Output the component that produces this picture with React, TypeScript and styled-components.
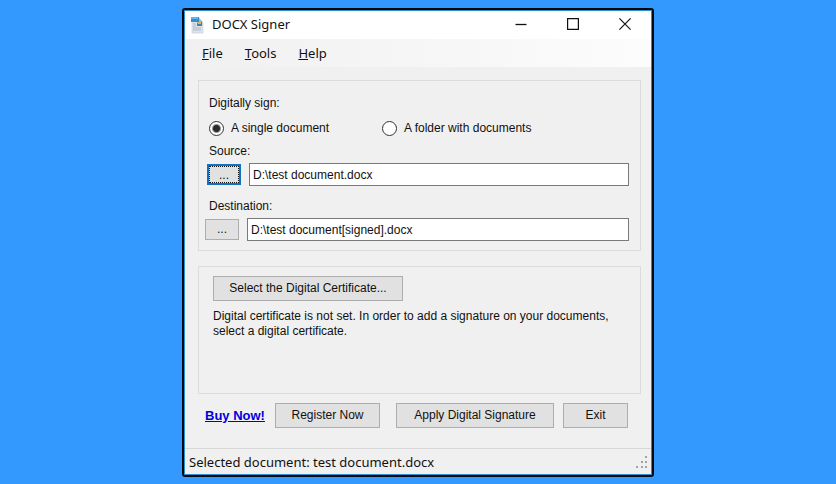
import React, { useState } from 'react';
import styled, { createGlobalStyle, css } from 'styled-components';

const GlobalStyle = createGlobalStyle`
  *, *::before, *::after { box-sizing: border-box; }
  body { margin: 0; background: #3399ff; }
`;

const classic = css`
  font-family: 'Liberation Sans', Arial, sans-serif;
  font-size: 12px;
  line-height: 15px;
  color: #111;
`;

const modern = css`
  font-family: 'Noto Sans', 'Open Sans', sans-serif;
  font-size: 13px;
  line-height: 18px;
  color: #111;
`;

const Desktop = styled.div`
  display: flex;
  min-height: 100vh;
  padding: 8px 182px 7px;
  background: #3399ff;
`;

const AppWindow = styled.main`
  ${classic}
  flex: 1;
  min-width: 0;
  display: flex;
  flex-direction: column;
  border: 2px solid #05080c;
  border-radius: 3px;
  background: #f0f0f0;
  box-shadow: inset 0 0 0 1px #2b8fd0;
  padding: 1px;
`;

const TitleBar = styled.header`
  ${modern}
  display: flex;
  align-items: center;
  height: 28px;
  padding-left: 5px;
  background: #fff;
`;

const Title = styled.h1`
  flex: 1;
  margin: 0 0 2px 8px;
  font-size: 13px;
  font-weight: 400;
`;

const CaptionButton = styled.button`
  display: grid;
  place-items: center;
  width: 52px;
  height: 28px;
  padding: 0 1px 2px 0;
  border: 0;
  background: transparent;
`;

const MenuBar = styled.nav`
  display: flex;
  align-items: center;
  gap: 6px;
  height: 28px;
  padding-left: 9px;
  background: linear-gradient(90deg, #f0f0f0, #fcfcfc);
`;

const MenuItem = styled.button`
  ${modern}
  border: 0;
  padding: 0 8px;
  background: transparent;
`;

const Content = styled.div`
  flex: 1;
  display: flex;
  flex-direction: column;
  padding: 13px 10px 20px 13px;
`;

const Group = styled.section`
  border: 1px solid #dcdcdc;
`;

const SignGroup = styled(Group)`
  padding: 15px 11px 9px 6px;
  margin-bottom: 15px;
`;

const CertificateGroup = styled(Group)`
  flex: 1;
  padding: 9px 13px 9px 14px;
  margin-bottom: 9px;
`;

const GroupHeading = styled.div`
  padding-left: 4px;
`;

const FieldLabel = styled.label`
  display: block;
  padding-left: 4px;
`;

const Choices = styled.div`
  display: grid;
  grid-template-columns: 173px 1fr;
  padding: 9px 0 8px 4px;
`;

const Choice = styled.label`
  display: flex;
  align-items: center;
  gap: 7px;
  height: 16px;
`;

const Radio = styled.input`
  appearance: none;
  width: 15px;
  height: 15px;
  margin: 0;
  border: 1px solid #333;
  border-radius: 50%;
  background: #fff;
  &:checked {
    background: radial-gradient(circle, #2b2b2b 0 3px, #fff 5px);
  }
`;

const PathRow = styled.div<{ $active?: boolean }>`
  display: flex;
  align-items: center;
  gap: 8px;
  padding-left: ${(p) => (p.$active ? 2 : 0)}px;
  margin: ${(p) => (p.$active ? '4px 0 13px' : '4px 0 0')};
`;

const PushButton = styled.button`
  ${classic}
  height: 25px;
  padding: 0 14px;
  border: 1px solid #adadad;
  background: #e1e1e1;
  white-space: nowrap;
`;

const BrowseButton = styled(PushButton)<{ $active?: boolean }>`
  width: 34px;
  height: 21px;
  padding: 0;
  ${(p) =>
    p.$active &&
    css`
      border: 2px solid #0f72c4;
      outline: 1px dotted #111;
      outline-offset: -3px;
      line-height: 19px;
    `}
`;

const PathInput = styled.input`
  ${classic}
  flex: 1;
  min-width: 0;
  height: 23px;
  padding: 0 3px;
  border: 1px solid #7a7a7a;
  border-radius: 0;
  background: #fff;
  outline: 0;
`;

const CertificateButton = styled(PushButton)`
  width: 190px;
  padding: 0;
`;

const Message = styled.p`
  margin: 8px 0 0;
`;

const Actions = styled.footer`
  display: flex;
  align-items: center;
  padding: 0 13px 0 7px;
`;

const BuyLink = styled.a`
  flex: 1;
  color: #0000e0;
  font-size: 13px;
  font-weight: 700;
  white-space: nowrap;
`;

const RegisterButton = styled(PushButton)`
  width: 105px;
  margin-right: 16px;
`;

const ApplyButton = styled(PushButton)`
  width: 158px;
  margin-right: 9px;
`;

const ExitButton = styled(PushButton)`
  width: 65px;
`;

const StatusBar = styled.div`
  ${modern}
  display: flex;
  align-items: center;
  justify-content: space-between;
  height: 26px;
  padding: 0 3px 0 4px;
  border-top: 1px solid #d7d7d7;
`;

const DocumentIcon = () => (
  <svg width="14" height="18" viewBox="0 0 14 18" aria-hidden="true">
    <path d="M2 3h7l4 4v10H2z" fill="#dfe4ec" stroke="#c2c9d3" strokeWidth="0.6" />
    <path d="M1 1h8l1 5H1z" fill="#2f8fd8" />
    <path d="M1 1h7v2H1z" fill="#63b5ee" />
    <path d="M9 2l4 4H9z" fill="#88bce5" />
    <path d="M7 6h5v4H7z" fill="#447da8" />
    <path d="M7 6h4v2H8z" fill="#e0b84c" />
    <path d="M3 8h3M3 10h3M3 12h8M3 14h8" stroke="#9faabc" strokeWidth="0.8" />
  </svg>
);

const MinimizeIcon = () => (
  <svg width="12" height="12" viewBox="0 0 12 12" aria-hidden="true">
    <path d="M0.5 6.5h11" stroke="#111" strokeWidth="1.3" />
  </svg>
);

const MaximizeIcon = () => (
  <svg width="12" height="12" viewBox="0 0 12 12" aria-hidden="true">
    <path d="M0.6 0.6h10.8v10.8H0.6z" fill="none" stroke="#111" strokeWidth="1.2" />
  </svg>
);

const CloseIcon = () => (
  <svg width="12" height="12" viewBox="0 0 12 12" aria-hidden="true">
    <path d="M0.4 0.4l11.2 11.2M11.6 0.4L0.4 11.6" stroke="#111" strokeWidth="1.2" />
  </svg>
);

const GRIP_DOTS = [[9, 0], [5, 5], [9, 5], [0, 10], [5, 10], [9, 10]];

const SizeGrip = () => (
  <svg width="12" height="12" viewBox="0 0 12 12" aria-hidden="true">
    {GRIP_DOTS.map(([x, y]) => (
      <rect key={`${x}-${y}`} x={x} y={y} width="2" height="2" fill="#a3a3a3" />
    ))}
  </svg>
);

export default function App() {
  const [mode, setMode] = useState('single');
  const [source, setSource] = useState('D:\\test document.docx');
  const [destination, setDestination] = useState('D:\\test document[signed].docx');

  return (
    <>
      <GlobalStyle />
      <Desktop>
        <AppWindow>
          <TitleBar>
            <DocumentIcon />
            <Title>DOCX Signer</Title>
            <CaptionButton aria-label="Minimize"><MinimizeIcon /></CaptionButton>
            <CaptionButton aria-label="Maximize"><MaximizeIcon /></CaptionButton>
            <CaptionButton aria-label="Close"><CloseIcon /></CaptionButton>
          </TitleBar>
          <MenuBar>
            <MenuItem><u>F</u>ile</MenuItem>
            <MenuItem><u>T</u>ools</MenuItem>
            <MenuItem><u>H</u>elp</MenuItem>
          </MenuBar>
          <Content>
            <SignGroup>
              <GroupHeading id="mode-label">Digitally sign:</GroupHeading>
              <Choices role="radiogroup" aria-labelledby="mode-label">
                <Choice>
                  <Radio type="radio" name="mode" checked={mode === 'single'} onChange={() => setMode('single')} />
                  A single document
                </Choice>
                <Choice>
                  <Radio type="radio" name="mode" checked={mode === 'folder'} onChange={() => setMode('folder')} />
                  A folder with documents
                </Choice>
              </Choices>
              <FieldLabel htmlFor="source">Source:</FieldLabel>
              <PathRow $active>
                <BrowseButton $active aria-label="Browse for source">...</BrowseButton>
                <PathInput id="source" value={source} onChange={(e) => setSource(e.target.value)} />
              </PathRow>
              <FieldLabel htmlFor="destination">Destination:</FieldLabel>
              <PathRow>
                <BrowseButton aria-label="Browse for destination">...</BrowseButton>
                <PathInput id="destination" value={destination} onChange={(e) => setDestination(e.target.value)} />
              </PathRow>
            </SignGroup>
            <CertificateGroup>
              <CertificateButton>Select the Digital Certificate...</CertificateButton>
              <Message>
                Digital certificate is not set. In order to add a signature on your documents, select a digital
                certificate.
              </Message>
            </CertificateGroup>
            <Actions>
              <BuyLink href="#buy">Buy Now!</BuyLink>
              <RegisterButton>Register Now</RegisterButton>
              <ApplyButton>Apply Digital Signature</ApplyButton>
              <ExitButton>Exit</ExitButton>
            </Actions>
          </Content>
          <StatusBar>
            <span>Selected document: test document.docx</span>
            <SizeGrip />
          </StatusBar>
        </AppWindow>
      </Desktop>
    </>
  );
}
